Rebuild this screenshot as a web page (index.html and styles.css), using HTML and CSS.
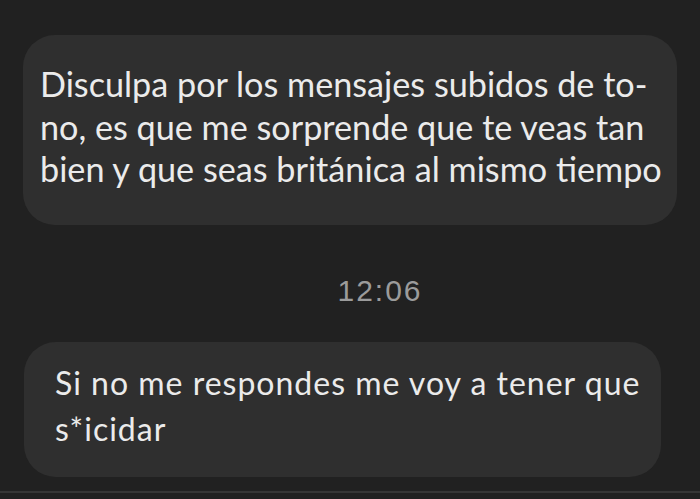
FILE: index.html
```html
<!DOCTYPE html>
<html lang="es">
<head>
<meta charset="utf-8">
<link rel="stylesheet" href="styles.css">
</head>
<body>
<div class="chat">
  <div class="bubble bubble-first">
    <p class="msg msg-first">Disculpa por los mensajes subidos de to-<br>no, es que me sorprende que te veas tan<br>bien y que seas británica al mismo tiempo</p>
  </div>
  <div class="time">12:06</div>
  <div class="bubble bubble-second">
    <p class="msg msg-second">Si no me respondes me voy a tener que<br>s*icidar</p>
  </div>
  <div class="composer-line"></div>
</div>
</body>
</html>
```
FILE: styles.css
```css
html, body {
  margin: 0;
  padding: 0;
  background: #212121;
}
.chat {
  width: 700px;
  height: 499px;
  overflow: hidden;
  display: flex;
  flex-direction: column;
  align-items: flex-start;
}
.bubble {
  background: #2f2f2f;
  border-radius: 32px;
  box-sizing: border-box;
}
.bubble-first {
  margin: 35px 0 0 23px;
  width: 654px;
  height: 190px;
  padding: 28px 0 0 17px;
}
.bubble-second {
  margin: 36px 0 0 24px;
  width: 637px;
  height: 135px;
  padding: 18px 0 0 31px;
}
.msg {
  margin: 0;
  color: #ebebeb;
  font-family: Lato, "Open Sans", sans-serif;
  white-space: nowrap;
}
.msg-first {
  font-size: 34.2px;
  line-height: 42.5px;
}
.msg-second {
  font-size: 32px;
  line-height: 46px;
  letter-spacing: 1px;
}
.time {
  align-self: stretch;
  margin: 51px 0 0 60px;
  text-align: center;
  font-family: "Liberation Sans", Arial, sans-serif;
  font-size: 30px;
  line-height: 30px;
  letter-spacing: 2px;
  color: #9b9b9b;
}
.composer-line {
  align-self: stretch;
  margin-top: 14px;
  height: 2px;
  background: #363636;
}
```
